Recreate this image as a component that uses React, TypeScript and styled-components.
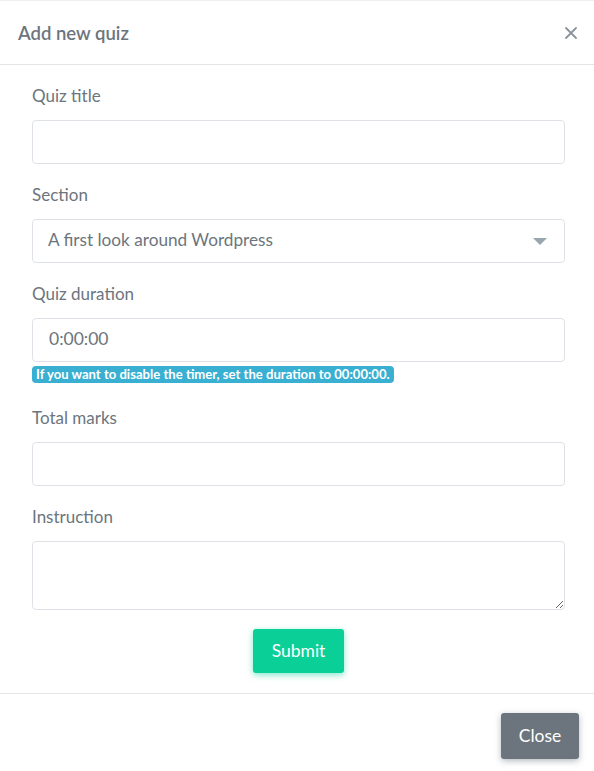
import React from "react";
import styled, { createGlobalStyle } from "styled-components";

const Global = createGlobalStyle`
  html, body { margin: 0; padding: 0; background: #fff; }
  body { font-family: Lato, "Noto Sans", sans-serif; color: #6c757d; }
  * { box-sizing: border-box; }
`;

const Modal = styled.div`
  width: 594px;
  height: 771px;
  background: #fff;
  border-top: 1px solid #eef0f2;
  display: flex;
  flex-direction: column;
`;

const Header = styled.div`
  height: 64px;
  display: flex;
  align-items: center;
  justify-content: space-between;
  padding: 0 16px 0 18px;
  border-bottom: 1px solid #e3e6e9;
`;

const Title = styled.h4`
  margin: 0;
  font-size: 18.5px;
  font-weight: 600;
  color: #6c757d;
`;

const CloseX = styled.button`
  border: 0;
  background: none;
  padding: 0;
  width: 14px;
  height: 14px;
  display: flex;
  align-items: center;
  justify-content: center;
  cursor: pointer;
`;

const Body = styled.form`
  padding: 19px 29px 20px 32px;
  display: flex;
  flex-direction: column;
`;

const Group = styled.div<{ $mb?: number }>`
  display: flex;
  flex-direction: column;
  margin-bottom: ${(p) => p.$mb ?? 19}px;
`;

const Label = styled.label`
  height: 24px;
  line-height: 24px;
  font-size: 17px;
  color: #6c757d;
  margin-bottom: 12px;
`;

const Input = styled.input`
  height: 44px;
  width: 100%;
  border: 1px solid #dee2e6;
  border-radius: 4px;
  padding: 0 16px 3px;
  font-family: inherit;
  font-size: 17.5px;
  color: #6c757d;
  outline: none;
  &::placeholder { color: #98a6ad; }
`;

const SelectBox = styled.div`
  position: relative;
  height: 44px;
  border: 1px solid #dee2e6;
  border-radius: 4px;
  padding: 0 15px 3px;
  display: flex;
  align-items: center;
  font-size: 17.2px;
  color: #6c757d;
`;

const Caret = styled.span`
  position: absolute;
  right: 17px;
  top: 18px;
  width: 0;
  height: 0;
  border-left: 7px solid transparent;
  border-right: 7px solid transparent;
  border-top: 7px solid #98a6ad;
`;

const Badge = styled.span`
  align-self: flex-start;
  margin-top: 4px;
  background: #39afd1;
  color: #fff;
  font-size: 13.1px;
  font-weight: 700;
  line-height: 17px;
  padding: 0 4px;
  border-radius: 4px;
`;

const TextArea = styled.textarea`
  height: 69px;
  width: 100%;
  border: 1px solid #dee2e6;
  border-radius: 4px;
  padding: 8px 16px;
  font-family: inherit;
  font-size: 16px;
  color: #6c757d;
  outline: none;
  resize: vertical;
  display: block;
`;

const Center = styled.div`
  display: flex;
  justify-content: center;
`;

const Button = styled.button<{ $variant: "success" | "secondary" }>`
  border: 0;
  border-radius: 3px;
  color: #fff;
  font-family: inherit;
  font-size: 17.5px;
  cursor: pointer;
  padding: 0 0 2px;
  background: ${(p) => (p.$variant === "success" ? "#0acf97" : "#6c757d")};
  box-shadow: 0 2px 6px 0
    ${(p) => (p.$variant === "success" ? "rgba(10,207,151,0.5)" : "rgba(108,117,125,0.5)")};
`;

const SubmitButton = styled(Button)`
  width: 91px;
  height: 44px;
`;

const CloseButton = styled(Button)`
  width: 78px;
  height: 46px;
`;

const Footer = styled.div`
  border-top: 1px solid #e3e6e9;
  padding: 19px 15px 12px;
  display: flex;
  justify-content: flex-end;
`;

export default function App() {
  return (
    <>
      <Global />
      <Modal>
        <Header>
          <Title>Add new quiz</Title>
          <CloseX aria-label="close">
            <svg width="12" height="12" viewBox="0 0 12 12">
              <path d="M1 1L11 11M11 1L1 11" stroke="#8a939b" strokeWidth="1.8" strokeLinecap="round" />
            </svg>
          </CloseX>
        </Header>
        <Body onSubmit={(e) => e.preventDefault()}>
          <Group>
            <Label>Quiz title</Label>
            <Input />
          </Group>
          <Group>
            <Label>Section</Label>
            <SelectBox>
              A first look around Wordpress
              <Caret />
            </SelectBox>
          </Group>
          <Group $mb={23}>
            <Label>Quiz duration</Label>
            <Input defaultValue="0:00:00" />
            <Badge>If you want to disable the timer, set the duration to 00:00:00.</Badge>
          </Group>
          <Group>
            <Label>Total marks</Label>
            <Input />
          </Group>
          <Group>
            <Label>Instruction</Label>
            <TextArea />
          </Group>
          <Center>
            <SubmitButton $variant="success" type="submit">Submit</SubmitButton>
          </Center>
        </Body>
        <Footer>
          <CloseButton $variant="secondary" type="button">Close</CloseButton>
        </Footer>
      </Modal>
    </>
  );
}
